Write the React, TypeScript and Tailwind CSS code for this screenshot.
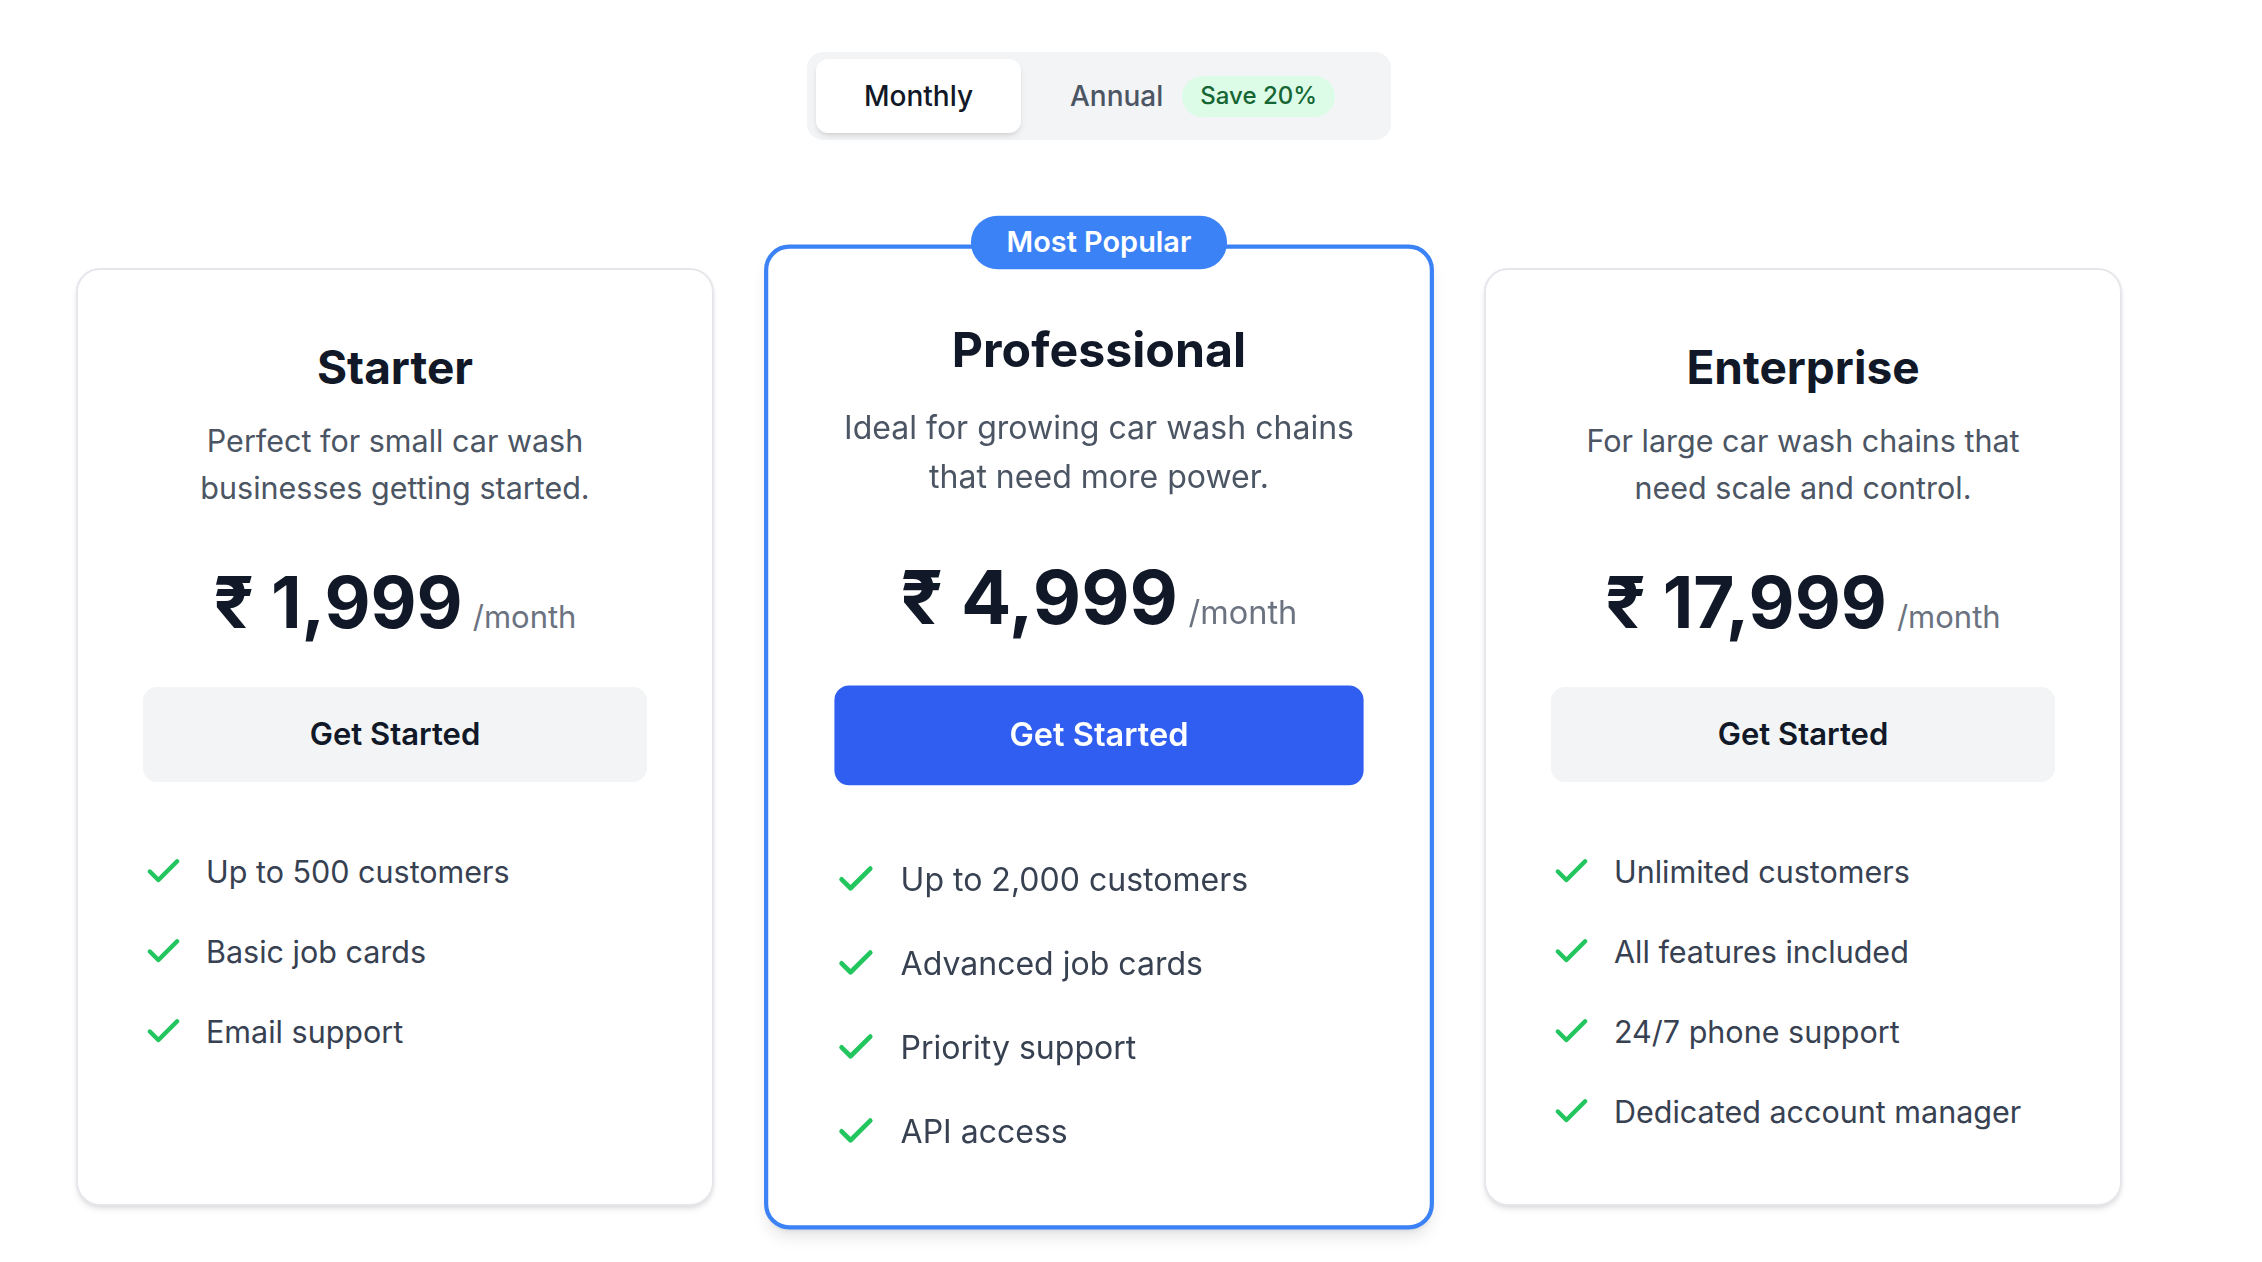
import { Check } from "lucide-react";

interface Plan {
  name: string;
  description: string[];
  price: string;
  features: string[];
  popular?: boolean;
}

const plans: Plan[] = [
  {
    name: "Starter",
    description: ["Perfect for small car wash", "businesses getting started."],
    price: "1,999",
    features: ["Up to 500 customers", "Basic job cards", "Email support"],
  },
  {
    name: "Professional",
    description: ["Ideal for growing car wash chains", "that need more power."],
    price: "4,999",
    features: [
      "Up to 2,000 customers",
      "Advanced job cards",
      "Priority support",
      "API access",
    ],
    popular: true,
  },
  {
    name: "Enterprise",
    description: ["For large car wash chains that", "need scale and control."],
    price: "17,999",
    features: [
      "Unlimited customers",
      "All features included",
      "24/7 phone support",
      "Dedicated account manager",
    ],
  },
];

const PlanCard = ({ plan }: { plan: Plan }) => {
  return (
    <div
      className={
        plan.popular
          ? "relative flex flex-col bg-white rounded-[24px] border-[4px] border-[#3b82f6] shadow-lg scale-[1.05] px-[63px] pt-[70px] pb-[69px]"
          : "relative flex flex-col bg-white rounded-[24px] border-2 border-[#e5e7eb] shadow-md px-[65px] pt-[71px] pb-[69px]"
      }
    >
      {plan.popular && (
        <div className="absolute top-[-6px] left-1/2 -translate-x-1/2 -translate-y-1/2 h-[51px] px-[34px] flex items-center rounded-full bg-[#3b82f6] text-white text-[27.5px] font-semibold whitespace-nowrap">
          Most Popular
        </div>
      )}

      <h3 className="text-center text-[46px] leading-[52px] font-bold text-[#111827]">
        {plan.name}
      </h3>
      <p className="mt-[24px] text-center text-[30.5px] leading-[47px] text-[#4b5563]">
        {plan.description[0]}
        <br />
        {plan.description[1]}
      </p>

      <div className="mt-[56px] flex items-baseline justify-center gap-[10px]">
        <span className="text-[71px] leading-none font-bold text-[#111827]">
          ₹ {plan.price}
        </span>
        <span className="text-[31px] text-[#6b7280]">/month</span>
      </div>

      <button
        className={
          plan.popular
            ? "mt-[46px] h-[95px] w-full rounded-[14px] bg-[#2f5ef0] text-white text-[31px] font-semibold"
            : "mt-[46px] h-[95px] w-full rounded-[14px] bg-[#f3f4f6] text-[#111827] text-[31px] font-semibold"
        }
      >
        Get Started
      </button>

      <ul className="mt-[70px] flex flex-col gap-[40px]">
        {plan.features.map((feature) => (
          <li key={feature} className="flex items-center gap-[22px] h-[40px]">
            <Check size={41} strokeWidth={2.6} className="text-[#22c55e] shrink-0" />
            <span className="text-[30.5px] text-[#374151]">{feature}</span>
          </li>
        ))}
      </ul>
    </div>
  );
};

export default function App() {
  return (
    <div
      className="min-h-screen bg-white w-[2198px] flex flex-col items-center pt-[52px] pb-[40px]"
      style={{ fontFamily: "Inter, 'Noto Sans', sans-serif" }}
    >
      <div className="flex items-center gap-0 rounded-[16px] bg-[#f3f4f6] px-[9px] py-[7px]">
        <button className="h-[74px] w-[205px] rounded-[12px] bg-white shadow-md text-[28px] font-medium text-[#111827]">
          Monthly
        </button>
        <button className="h-[74px] flex items-center gap-[19px] pl-[49px] pr-[47px] text-[28px] font-medium text-[#4b5563]">
          Annual
          <span className="h-[41px] px-[18px] flex items-center rounded-full bg-[#dcfce7] text-[#166534] text-[24px] font-medium">
            Save 20%
          </span>
        </button>
      </div>

      <div className="mt-[128px] grid grid-cols-3 gap-[66px] w-[2046px]">
        {plans.map((plan) => (
          <PlanCard key={plan.name} plan={plan} />
        ))}
      </div>
    </div>
  );
}
